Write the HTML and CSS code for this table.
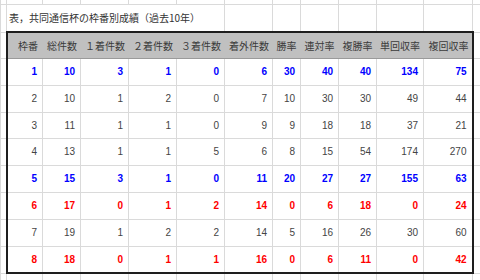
FILE: index.html
```html
<!DOCTYPE html>
<html lang="ja">
<head>
<meta charset="utf-8">
<link rel="stylesheet" href="styles.css">
</head>
<body>
<table class="sheet">
  <colgroup>
    <col class="w6"><col class="w36"><col class="w38"><col class="w48"><col class="w48"><col class="w48"><col class="w48"><col class="w28"><col class="w38"><col class="w38"><col class="w47"><col class="w49"><col class="w8">
  </colgroup>
  <tr class="r-top"><td></td><td></td><td></td><td></td><td></td><td></td><td></td><td></td><td></td><td></td><td></td><td></td><td></td></tr>
  <tr class="r-title"><td></td><td colspan="5" class="title">表，共同通信杯の枠番別成績（過去10年）</td><td></td><td></td><td></td><td></td><td></td><td></td><td></td></tr>
  <tr class="r-head">
    <td></td>
    <th>枠番</th><th>総件数</th><th>１着件数</th><th>２着件数</th><th>３着件数</th><th>着外件数</th><th class="ctr">勝率</th><th class="ctr">連対率</th><th class="ctr">複勝率</th><th>単回収率</th><th>複回収率</th>
    <td></td>
  </tr>
  <tr class="data blue h27"><td></td><td>1</td><td>10</td><td>3</td><td>1</td><td>0</td><td>6</td><td>30</td><td>40</td><td>40</td><td>134</td><td>75</td><td></td></tr>
  <tr class="data h27"><td></td><td>2</td><td>10</td><td>1</td><td>2</td><td>0</td><td>7</td><td>10</td><td>30</td><td>30</td><td>49</td><td>44</td><td></td></tr>
  <tr class="data h26"><td></td><td>3</td><td>11</td><td>1</td><td>1</td><td>0</td><td>9</td><td>9</td><td>18</td><td>18</td><td>37</td><td>21</td><td></td></tr>
  <tr class="data h27"><td></td><td>4</td><td>13</td><td>1</td><td>1</td><td>5</td><td>6</td><td>8</td><td>15</td><td>54</td><td>174</td><td>270</td><td></td></tr>
  <tr class="data blue h27"><td></td><td>5</td><td>15</td><td>3</td><td>1</td><td>0</td><td>11</td><td>20</td><td>27</td><td>27</td><td>155</td><td>63</td><td></td></tr>
  <tr class="data red h27"><td></td><td>6</td><td>17</td><td>0</td><td>1</td><td>2</td><td>14</td><td>0</td><td>6</td><td>18</td><td>0</td><td>24</td><td></td></tr>
  <tr class="data h27"><td></td><td>7</td><td>19</td><td>1</td><td>2</td><td>2</td><td>14</td><td>5</td><td>16</td><td>26</td><td>30</td><td>60</td><td></td></tr>
  <tr class="data red last h26"><td></td><td>8</td><td>18</td><td>0</td><td>1</td><td>1</td><td>16</td><td>0</td><td>6</td><td>11</td><td>0</td><td>42</td><td></td></tr>
  <tr class="r-bottom"><td></td><td></td><td></td><td></td><td></td><td></td><td></td><td></td><td></td><td></td><td></td><td></td><td></td></tr>
</table>
</body>
</html>
```

FILE: styles.css
```css
html, body {
  margin: 0;
  padding: 0;
  background: #ffffff;
  width: 480px;
  height: 280px;
  overflow: hidden;
}

.sheet {
  border-collapse: collapse;
  table-layout: fixed;
  width: 480px;
  margin: 0;
}

.w6 { width: 6px; }
.w8 { width: 8px; }
.w28 { width: 28px; }
.w36 { width: 36px; }
.w38 { width: 38px; }
.w47 { width: 47px; }
.w48 { width: 48px; }
.w49 { width: 49px; }

.sheet td,
.sheet th {
  border: 1px solid #dadada;
  padding: 0;
  line-height: 12px;
  overflow: visible;
  white-space: nowrap;
}

.r-top td { height: 4px; border-top: none; }
.r-title td { height: 26px; }
.r-head th,
.r-head td { height: 25px; }
.h27 td { height: 26px; }
.h26 td { height: 25px; }
.r-bottom td { height: 10px; }

.title {
  font-family: "Noto Sans CJK JP", sans-serif;
  font-size: 10px;
  color: #333333;
  text-align: left;
  padding-left: 2px !important;
  vertical-align: middle;
}

.r-head th {
  background: #c0c0c0;
  font-family: "Noto Sans CJK JP", sans-serif;
  font-size: 10px;
  font-weight: normal;
  color: #3a3a3a;
  text-align: right;
  padding-right: 3px;
  border-color: #c0c0c0;
  border-top: 2px solid #1e1e1e;
  border-bottom: 1px solid #9a9a9a;
  vertical-align: middle;
}
.r-head th.ctr { text-align: center; padding-right: 0; }
.r-head th:nth-child(2) { border-left: 2px solid #1e1e1e; padding-right: 4px; }
.r-head th:nth-child(12) { border-right: 2px solid #1e1e1e; }

.data td {
  font-family: "Liberation Sans", Arial, sans-serif;
  font-size: 10px;
  color: #444444;
  text-align: right;
  padding-right: 5px;
  vertical-align: middle;
}
.data td:first-child,
.data td:last-child { padding-right: 0; }
.data td:nth-child(2) { border-left: 2px solid #1e1e1e; }
.data td:nth-child(12) { border-right: 2px solid #1e1e1e; }
.data.last td:not(:first-child):not(:last-child) { border-bottom: 2px solid #1e1e1e; }

.blue td { color: #0000ff; font-weight: bold; }
.red td { color: #ff0000; font-weight: bold; }
```
